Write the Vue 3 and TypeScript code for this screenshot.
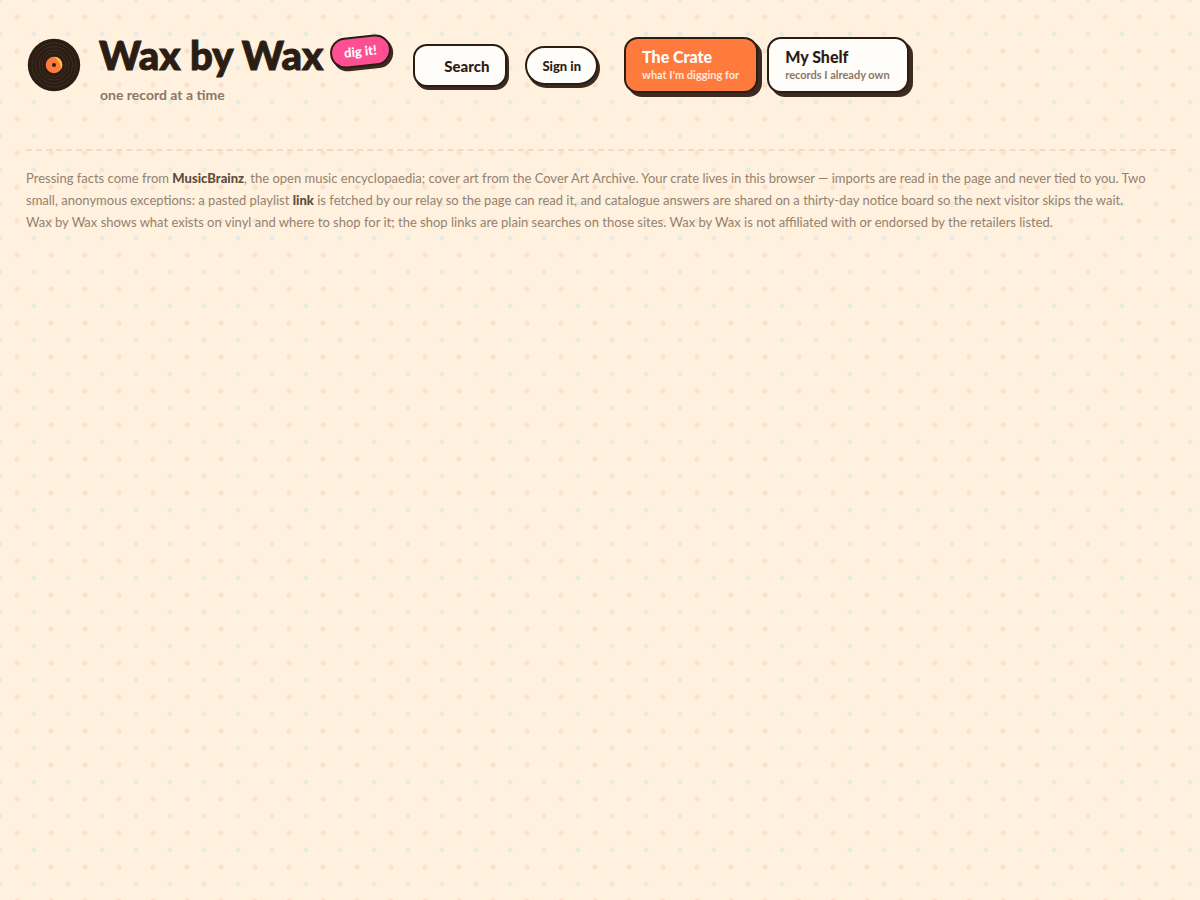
<script setup lang="ts">
interface Tab {
  id: string
  title: string
  note: string
}

const tabs: Tab[] = [
  { id: 'crate', title: 'The Crate', note: "what I'm digging for" },
  { id: 'shelf', title: 'My Shelf', note: 'records I already own' },
]
const active = 'crate'
const grooves: number[] = [22, 18.5, 15, 12]
</script>

<template>
  <div class="page">
    <header class="top">
      <div class="brand">
        <svg class="record" viewBox="0 0 56 56" aria-hidden="true">
          <circle cx="28" cy="28" r="26.2" fill="#2b1d14" />
          <circle v-for="r in grooves" :key="r" cx="28" cy="28" :r="r" fill="none" stroke="#4a392b" stroke-width="0.6" />
          <circle cx="28" cy="28" r="8.3" fill="#ff7a3d" />
          <path d="M28 19.7a8.3 8.3 0 0 1 7.2 12.4q-.6-8-7.2-12.4z" fill="#ffc43d" />
          <circle cx="28" cy="28" r="2" fill="#2b1d14" />
        </svg>
        <div class="names">
          <div class="title-row">
            <h1>Wax by Wax</h1>
            <span class="badge">dig it!</span>
          </div>
          <p class="tagline">one record at a time</p>
        </div>
      </div>
      <button type="button" class="pill search">Search</button>
      <button type="button" class="pill sign">Sign in</button>
      <nav class="tabs">
        <button v-for="tab in tabs" :key="tab.id" type="button" class="tab" :class="{ active: tab.id === active }">
          <span class="tab-title">{{ tab.title }}</span>
          <span class="tab-note">{{ tab.note }}</span>
        </button>
      </nav>
    </header>
    <footer class="foot">
      Pressing facts come from <a href="#musicbrainz">MusicBrainz</a>, the open music encyclopaedia; cover art from the
      Cover Art Archive. Your crate lives in this browser — imports are read in the page and never tied to you. Two
      small, anonymous exceptions: a pasted playlist <b>link</b> is fetched by our relay so the page can read it, and
      catalogue answers are shared on a thirty-day notice board so the next visitor skips the wait.<br />
      Wax by Wax shows what exists on vinyl and where to shop for it; the shop links are plain searches on those sites.
      Wax by Wax is not affiliated with or endorsed by the retailers listed.
    </footer>
  </div>
</template>

<style>
body {
  background-color: #fff1dd;
  background-image:
    radial-gradient(circle at 17px 17px, #fde0cb 2px, transparent 3px),
    radial-gradient(circle at 17px 17px, #e8ebe2 2px, rgba(232, 235, 226, 0) 3px);
  background-size: 34px 34px;
  background-position: 0 0, 17px 17px;
}
</style>

<style scoped>
.page {
  padding: 34px 24px 40px 26px;
  color: #2b1d14;
  font-family: Lato, "Open Sans", sans-serif;
}
.top {
  display: flex;
  align-items: flex-start;
}
.brand {
  display: flex;
  gap: 17px;
  margin-right: 22px;
}
.record {
  flex: none;
  width: 56px;
  height: 56px;
  margin-top: 3px;
}
.title-row {
  display: flex;
  gap: 7px;
}
h1 {
  margin: 0;
  font-size: 40px;
  line-height: 42px;
  font-weight: 900;
  white-space: nowrap;
  -webkit-text-stroke: 1px #2b1d14;
}
.badge {
  box-sizing: border-box;
  height: 31px;
  margin-top: 2px;
  padding: 0 12px;
  border: 2px solid #2b1d14;
  border-radius: 16px;
  background: #ff4f93;
  box-shadow: 2px 3px 0 #3d2b20;
  color: #fff;
  font-size: 13px;
  line-height: 27px;
  font-weight: 900;
  white-space: nowrap;
  transform: rotate(-6deg);
}
.tagline {
  margin: 9px 0 0 1px;
  color: #8a7767;
  font-size: 14px;
  line-height: 20px;
  font-weight: 700;
}
button {
  border: 2px solid #2b1d14;
  background: #fffdf9;
  color: #2b1d14;
  font-family: inherit;
  white-space: nowrap;
}
.pill {
  font-weight: 900;
}
.search {
  height: 43px;
  margin: 10px 18px 0 0;
  padding: 0 16px 0 29px;
  border-radius: 14px;
  box-shadow: 2px 3px 0 #3d2b20;
  font-size: 15px;
}
.sign {
  height: 39px;
  margin: 12px 26px 0 0;
  padding: 0 15px;
  border-radius: 20px;
  box-shadow: 2px 3px 0 #3d2b20;
  font-size: 13px;
}
.tabs {
  display: flex;
  gap: 9px;
  margin-top: 3px;
}
.tab {
  display: flex;
  flex-direction: column;
  height: 56px;
  padding: 8px 17px 6px 16px;
  border-radius: 14px;
  box-shadow: 4px 4px 0 #3d2b20;
  text-align: left;
}
.tab-title {
  font-size: 16px;
  line-height: 20px;
  font-weight: 900;
}
.tab-note {
  color: #8a7767;
  font-size: 11px;
  line-height: 16px;
  font-weight: 700;
}
.tab.active {
  background: #ff7a3d;
  color: #fff;
}
.active .tab-note {
  color: #ffe9dc;
}
.foot {
  margin-top: 44px;
  padding-top: 16px;
  border-top: 2px dashed #f3dac8;
  color: #948170;
  font-size: 13px;
  line-height: 22px;
}
.foot a,
.foot b {
  color: #5f4d3e;
  font-weight: 900;
  text-decoration: none;
}
</style>
